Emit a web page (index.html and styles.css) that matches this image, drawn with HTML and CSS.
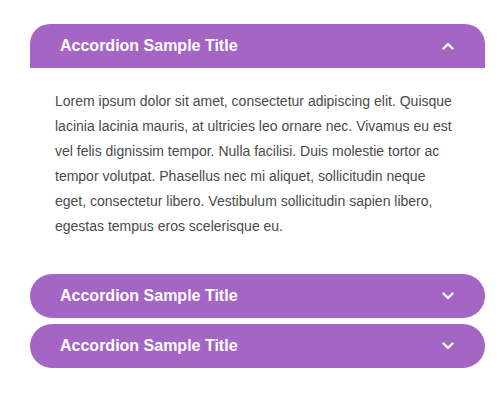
FILE: index.html
```html
<!DOCTYPE html>
<html>
<head>
<meta charset="utf-8">
<link rel="stylesheet" href="styles.css">
</head>
<body>
<div class="accordion">
  <div class="item open">
    <div class="header">
      <span class="title">Accordion Sample Title</span>
      <svg class="chev" width="12" height="8" viewBox="0 0 12 8"><polyline points="1.5,6.5 6,2 10.5,6.5" fill="none" stroke="#fff" stroke-width="2.4" stroke-linecap="round" stroke-linejoin="round"/></svg>
    </div>
    <div class="panel">Lorem ipsum dolor sit amet, consectetur adipiscing elit. Quisque lacinia lacinia mauris, at ultricies leo ornare nec. Vivamus eu est vel felis dignissim tempor. Nulla facilisi. Duis molestie tortor ac tempor volutpat. Phasellus nec mi aliquet, sollicitudin neque eget, consectetur libero. Vestibulum sollicitudin sapien libero, egestas tempus eros scelerisque eu.</div>
  </div>
  <div class="item">
    <div class="header">
      <span class="title">Accordion Sample Title</span>
      <svg class="chev" width="12" height="8" viewBox="0 0 12 8"><polyline points="1.5,1.5 6,6 10.5,1.5" fill="none" stroke="#fff" stroke-width="2.4" stroke-linecap="round" stroke-linejoin="round"/></svg>
    </div>
  </div>
  <div class="item">
    <div class="header">
      <span class="title">Accordion Sample Title</span>
      <svg class="chev" width="12" height="8" viewBox="0 0 12 8"><polyline points="1.5,1.5 6,6 10.5,1.5" fill="none" stroke="#fff" stroke-width="2.4" stroke-linecap="round" stroke-linejoin="round"/></svg>
    </div>
  </div>
</div>
</body>
</html>
```
FILE: styles.css
```css
html, body {
  margin: 0;
  padding: 0;
  background: #fff;
}
body {
  font-family: "Liberation Sans", Arial, sans-serif;
}
.accordion {
  width: 455px;
  margin-left: 30px;
  padding-top: 24px;
  display: flex;
  flex-direction: column;
  gap: 6px;
}
.header {
  height: 44px;
  box-sizing: border-box;
  padding: 0 31px 0 30px;
  background: #a565c5;
  color: #fff;
  border-radius: 22px;
  display: flex;
  align-items: center;
  justify-content: space-between;
}
.open .header {
  border-radius: 20px 20px 0 0;
}
.title {
  font-size: 16px;
  font-weight: bold;
}
.chev {
  display: block;
}
.panel {
  padding: 21px 25px 29px 25px;
  font-size: 14px;
  line-height: 25px;
  color: #4a4a4a;
}
```
